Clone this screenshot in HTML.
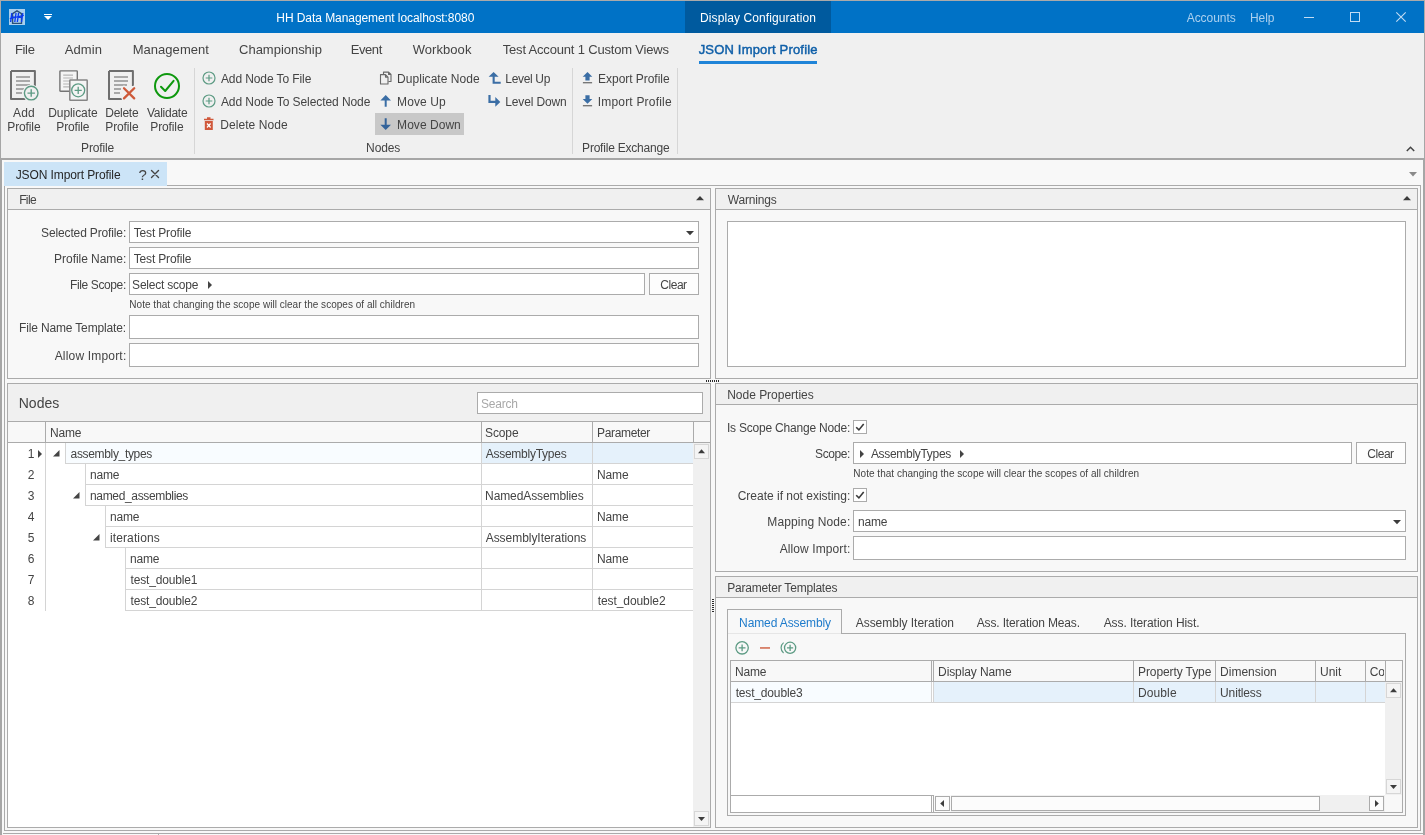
<!DOCTYPE html>
<html lang="en">
<head>
<meta charset="utf-8">
<title>HH Data Management localhost:8080</title>
<style>
html,body{margin:0;padding:0;}
body{width:1425px;height:835px;overflow:hidden;position:relative;background:#f8f8f8;font-family:"Liberation Sans", sans-serif;will-change:transform;}
.b{position:absolute;box-sizing:border-box;}
.t{position:absolute;white-space:pre;line-height:1;font-family:"Liberation Sans", sans-serif;will-change:opacity;}
svg{overflow:visible;}
</style>
</head>
<body>
<div id="app">
<div class="b" style="left:0px;top:0px;width:1425px;height:835px;background:#F8F8F8;"></div>
<div class="b" style="left:0px;top:0px;width:1425px;height:33px;background:#0072C6;"></div>
<div class="b" style="left:685px;top:1px;width:146px;height:32px;background:#005A9E;"></div>
<div class="b" style="left:1px;top:33px;width:1423px;height:125px;background:#F0F0F0;"></div>
<div class="b" style="left:0px;top:158px;width:1425px;height:2px;background:#A6A6A6"></div>
<div class="b" style="left:0px;top:0px;width:1425px;height:1px;background:#AAAAAA"></div>
<div class="b" style="left:0px;top:1px;width:1px;height:32px;background:#AAAAAA"></div>
<div class="b" style="left:1424px;top:1px;width:1px;height:32px;background:#AAAAAA"></div>
<div class="b" style="left:0px;top:33px;width:1px;height:802px;background:#A6A6A6"></div>
<div class="b" style="left:1424px;top:33px;width:1px;height:802px;background:#A6A6A6"></div>
<div class="b" style="left:1px;top:160px;width:1px;height:675px;background:#A6A6A6"></div>
<div class="b" style="left:1423px;top:160px;width:1px;height:675px;background:#A6A6A6"></div>
<header id="titlebar">
<svg class="b" style="left:9px;top:9px" width="16" height="16" viewBox="0 0 16 16"><rect x="0" y="0" width="16" height="16" fill="#A9CFEE"/><path d="M3.6 14.4 V4.7 L8 1.8 L12.5 4.7 V14.4 Z" fill="none" stroke="#2B5079" stroke-width="1.4"/><text x="0.8" y="13.2" font-family="Liberation Sans, sans-serif" font-size="12.5" font-style="italic" font-weight="700" fill="#0A3CF0" textLength="13.6" lengthAdjust="spacingAndGlyphs">HH</text><path d="M0.8 9.6 L14.8 6.4" stroke="#0A3CF0" stroke-width="1.2"/></svg>
<svg class="b" style="left:44px;top:14px" width="8" height="6" viewBox="0 0 8 6"><rect x="0" y="0" width="8" height="1" fill="#fff"/><path d="M0 2 H8 L4 6 Z" fill="#fff"/></svg>
<span class="t" style="top:11.84px;font-size:12px;color:#FFFFFF;letter-spacing:-0.064px;left:276.30px;">HH Data Management localhost:8080</span>
<span class="t" style="top:11.84px;font-size:12px;color:#FFFFFF;letter-spacing:0.091px;left:700.10px;">Display Configuration</span>
<span class="t" style="top:11.84px;font-size:12px;color:#ABD0EF;letter-spacing:-0.051px;left:1186.70px;">Accounts</span>
<span class="t" style="top:11.84px;font-size:12px;color:#ABD0EF;letter-spacing:-0.135px;left:1250.10px;">Help</span>
<svg class="b" style="left:1304px;top:17px" width="10" height="1" viewBox="0 0 10 1"><rect width="10" height="1" fill="#C2DCF3"/></svg>
<svg class="b" style="left:1350px;top:12px" width="10" height="10" viewBox="0 0 10 10"><rect x="0.5" y="0.5" width="9" height="9" fill="none" stroke="#C2DCF3" stroke-width="1"/></svg>
<svg class="b" style="left:1396px;top:12px" width="10" height="10" viewBox="0 0 10 10"><path d="M0.3 0.3 L9.7 9.7 M9.7 0.3 L0.3 9.7" stroke="#C2DCF3" stroke-width="1.1" fill="none"/></svg>
</header>
<nav id="menu">
<span class="t" style="top:43.00px;font-size:13px;color:#444;letter-spacing:-0.306px;left:14.90px;">File</span>
<span class="t" style="top:43.00px;font-size:13px;color:#444;letter-spacing:0.095px;left:64.70px;">Admin</span>
<span class="t" style="top:43.00px;font-size:13px;color:#444;letter-spacing:0.037px;left:132.70px;">Management</span>
<span class="t" style="top:43.00px;font-size:13px;color:#444;letter-spacing:-0.025px;left:239.10px;">Championship</span>
<span class="t" style="top:43.00px;font-size:13px;color:#444;letter-spacing:-0.408px;left:350.70px;">Event</span>
<span class="t" style="top:43.00px;font-size:13px;color:#444;letter-spacing:0.059px;left:412.70px;">Workbook</span>
<span class="t" style="top:43.00px;font-size:13px;color:#444;letter-spacing:-0.178px;left:502.70px;">Test Account 1 Custom Views</span>
<span class="t" style="top:43.00px;font-size:13px;color:#0F5FA8;letter-spacing:0.180px;left:698.70px;-webkit-text-stroke:0.45px #0F5FA8;">JSON Import Profile</span>
<div class="b" style="left:699px;top:61px;width:118px;height:3px;background:#1F84D8"></div>
</nav>
<section id="ribbon">
<svg class="b" style="left:8px;top:68px" width="34" height="34" viewBox="0 0 34 34"><path d="M3 3 H26.9 V20 M19 30.9 H3 V3" fill="none" stroke="#6E6E6E" stroke-width="2" stroke-linejoin="round"/><path d="M8 9 H22 M8 13 H22 M8 17 H22 M8 21 H16 M8 25 H14" stroke="#A9A9A9" stroke-width="2"/><circle cx="23.2" cy="25.1" r="8.6" fill="#F0F0F0"/><circle cx="23.2" cy="25.1" r="6.8" fill="#F0F0F0" stroke="#5D9B84" stroke-width="1.4"/><path d="M19.46 25.1 H26.939999999999998 M23.2 21.36 V28.840000000000003" stroke="#5D9B84" stroke-width="1.4" fill="none"/></svg>
<svg class="b" style="left:57px;top:68px" width="34" height="34" viewBox="0 0 34 34"><rect x="2.9" y="2.9" width="17.4" height="20.4" rx="0.6" fill="#F4F4F4" stroke="#747474" stroke-width="1.4"/><path d="M6.2 7.1 H16 M6.2 10 H16 M6.2 13 H16 M6.2 16 H16 M6.2 18.9 H16" stroke="#B4B4B4" stroke-width="1.1"/><rect x="12.8" y="12" width="17.4" height="20.3" rx="0.6" fill="#F4F4F4" stroke="#858585" stroke-width="1.5"/><circle cx="21.2" cy="22.3" r="6.5" fill="#F4F4F4" stroke="#5D9B84" stroke-width="1.3"/><path d="M17.625 22.3 H24.775 M21.2 18.725 V25.875" stroke="#5D9B84" stroke-width="1.3" fill="none"/></svg>
<svg class="b" style="left:106px;top:68px" width="34" height="34" viewBox="0 0 34 34"><path d="M3 3 H26.9 V18 M17 30.9 H3 V3" fill="none" stroke="#6E6E6E" stroke-width="2" stroke-linejoin="round"/><path d="M8 9 H22 M8 13 H22 M8 17 H21 M8 21 H15 M8 25 H14" stroke="#A9A9A9" stroke-width="2"/><path d="M18 20.2 L28.2 30.4 M28.2 20.2 L18 30.4" stroke="#F0F0F0" stroke-width="5" stroke-linecap="round" fill="none"/><path d="M18 20.2 L28.2 30.4 M28.2 20.2 L18 30.4" stroke="#CE5A3A" stroke-width="2.3" stroke-linecap="round" fill="none"/></svg>
<svg class="b" style="left:151px;top:70px" width="32" height="32" viewBox="0 0 32 32"><circle cx="16" cy="16" r="12" fill="none" stroke="#0E980E" stroke-width="2"/><path d="M10 16.8 L14.2 21 L22.6 10.8" fill="none" stroke="#0E980E" stroke-width="2" stroke-linecap="round" stroke-linejoin="round"/></svg>
<span class="t" style="top:106.84px;font-size:12px;color:#444;letter-spacing:0.261px;left:12.90px;">Add</span>
<span class="t" style="top:120.84px;font-size:12px;color:#444;letter-spacing:-0.123px;left:7.30px;">Profile</span>
<span class="t" style="top:106.84px;font-size:12px;color:#444;letter-spacing:-0.094px;left:48.30px;">Duplicate</span>
<span class="t" style="top:120.84px;font-size:12px;color:#444;letter-spacing:-0.157px;left:56.30px;">Profile</span>
<span class="t" style="top:106.84px;font-size:12px;color:#444;letter-spacing:-0.283px;left:105.30px;">Delete</span>
<span class="t" style="top:120.84px;font-size:12px;color:#444;letter-spacing:-0.123px;left:105.30px;">Profile</span>
<span class="t" style="top:106.84px;font-size:12px;color:#444;letter-spacing:-0.257px;left:146.90px;">Validate</span>
<span class="t" style="top:120.84px;font-size:12px;color:#444;letter-spacing:-0.123px;left:150.30px;">Profile</span>
<span class="t" style="top:141.84px;font-size:12px;color:#444;letter-spacing:-0.157px;left:81.10px;">Profile</span>
<div class="b" style="left:194px;top:68px;width:1px;height:86px;background:#D6D6D6"></div>
<svg class="b" style="left:202px;top:71px" width="14" height="14" viewBox="0 0 14 14"><circle cx="7" cy="7" r="6" fill="#F0F0F0" stroke="#5D9B84" stroke-width="1.2"/><path d="M3.6999999999999997 7 H10.3 M7 3.6999999999999997 V10.3" stroke="#5D9B84" stroke-width="1.2" fill="none"/></svg>
<svg class="b" style="left:202px;top:94px" width="14" height="14" viewBox="0 0 14 14"><circle cx="7" cy="7" r="6" fill="#F0F0F0" stroke="#5D9B84" stroke-width="1.2"/><path d="M3.6999999999999997 7 H10.3 M7 3.6999999999999997 V10.3" stroke="#5D9B84" stroke-width="1.2" fill="none"/></svg>
<svg class="b" style="left:203px;top:117px" width="12" height="14" viewBox="0 0 12 14"><path d="M1 2.5 H10.5 M4 1 H7.5" stroke="#D0583B" stroke-width="1.6" fill="none"/><path d="M1.8 4 H9.8 V13 H1.8 Z" fill="#D0583B"/><path d="M4 6.5 L7.6 10.5 M7.6 6.5 L4 10.5" stroke="#fff" stroke-width="1.2"/></svg>
<span class="t" style="top:72.84px;font-size:12px;color:#444;letter-spacing:-0.092px;left:220.90px;">Add Node To File</span>
<span class="t" style="top:95.84px;font-size:12px;color:#444;letter-spacing:-0.073px;left:220.90px;">Add Node To Selected Node</span>
<span class="t" style="top:118.84px;font-size:12px;color:#444;letter-spacing:0.056px;left:220.30px;">Delete Node</span>
<div class="b" style="left:375px;top:113px;width:89px;height:22px;background:#C8C8C8;"></div>
<svg class="b" style="left:379px;top:71px" width="14" height="14" viewBox="0 0 14 14"><path d="M4.5 3 V1.1 H9.6 L12 3.5 V10.5 H9.4 M9.6 1.1 V3.5 H12" fill="none" stroke="#686868" stroke-width="1.1" stroke-linejoin="round"/><path d="M1.5 3.6 H6.5 L9 6.1 V13 H1.5 Z M6.5 3.6 V6.1 H9" fill="none" stroke="#686868" stroke-width="1.1" stroke-linejoin="round"/></svg>
<svg class="b" style="left:379px;top:94px" width="14" height="14" viewBox="0 0 14 14"><path d="M6.7 1.1 L12 6.5 H7.7 V12.8 H5.7 V6.5 H1.4 Z" fill="#3B6EA5"/></svg>
<svg class="b" style="left:379px;top:117px" width="14" height="14" viewBox="0 0 14 14"><path d="M6.7 13.1 L12 7.7 H7.7 V1.2 H5.7 V7.7 H1.4 Z" fill="#33639A"/></svg>
<span class="t" style="top:72.84px;font-size:12px;color:#444;letter-spacing:0.033px;left:397.10px;">Duplicate Node</span>
<span class="t" style="top:95.84px;font-size:12px;color:#444;letter-spacing:0.076px;left:397.10px;">Move Up</span>
<span class="t" style="top:118.84px;font-size:12px;color:#444;letter-spacing:0.040px;left:397.10px;">Move Down</span>
<svg class="b" style="left:488px;top:71px" width="14" height="14" viewBox="0 0 14 14"><path d="M5.6 0.9 L10.6 5.7 H6.7 V10.8 H12.7 V12.8 H4.6 V5.7 H0.6 Z" fill="#3B6EA5"/></svg>
<svg class="b" style="left:488px;top:94px" width="14" height="14" viewBox="0 0 14 14"><path d="M0.4 1 H2.6 V6.8 H7.3 V3.1 L12.3 7.9 L7.3 12.7 V8.9 H0.4 Z" fill="#3B6EA5"/></svg>
<span class="t" style="top:72.84px;font-size:12px;color:#444;letter-spacing:-0.327px;left:505.30px;">Level Up</span>
<span class="t" style="top:95.84px;font-size:12px;color:#444;letter-spacing:-0.136px;left:505.30px;">Level Down</span>
<span class="t" style="top:141.84px;font-size:12px;color:#444;letter-spacing:-0.122px;left:366.10px;">Nodes</span>
<div class="b" style="left:572px;top:68px;width:1px;height:86px;background:#D6D6D6"></div>
<svg class="b" style="left:582px;top:71px" width="12" height="14" viewBox="0 0 12 14"><path d="M5.5 0.9 L10.3 5.8 H7.6 V9.4 H3.4 V5.8 H0.7 Z" fill="#3B6EA5"/><rect x="0.9" y="11.2" width="9.2" height="1.1" fill="#5A5A5A"/></svg>
<svg class="b" style="left:582px;top:94px" width="12" height="14" viewBox="0 0 12 14"><path d="M5.5 9.7 L10.3 4.9 H7.6 V1.3 H3.4 V4.9 H0.7 Z" fill="#3B6EA5"/><rect x="0.9" y="11.2" width="9.2" height="1.1" fill="#5A5A5A"/></svg>
<span class="t" style="top:72.84px;font-size:12px;color:#444;letter-spacing:-0.043px;left:598.10px;">Export Profile</span>
<span class="t" style="top:95.84px;font-size:12px;color:#444;letter-spacing:0.194px;left:597.70px;">Import Profile</span>
<span class="t" style="top:141.84px;font-size:12px;color:#444;letter-spacing:-0.216px;left:582.10px;">Profile Exchange</span>
<div class="b" style="left:677px;top:68px;width:1px;height:86px;background:#D6D6D6"></div>
<svg class="b" style="left:1406px;top:146px" width="9" height="6" viewBox="0 0 9 6"><path d="M0.8 5 L4.5 1.3 L8.2 5" fill="none" stroke="#444" stroke-width="1.5"/></svg>
</section>
<main id="workspace">
<div class="b" style="left:4px;top:162px;width:163px;height:24px;background:#CCE4F7;"></div>
<div class="b" style="left:167px;top:185px;width:1254px;height:1px;background:#ABABAB"></div>
<div class="b" style="left:4px;top:186px;width:1px;height:645px;background:#ABABAB"></div>
<div class="b" style="left:1420px;top:186px;width:1px;height:645px;background:#ABABAB"></div>
<div class="b" style="left:4px;top:830px;width:1417px;height:1px;background:#ABABAB"></div>
<span class="t" style="top:168.84px;font-size:12px;color:#262626;letter-spacing:-0.101px;left:15.70px;">JSON Import Profile</span>
<span class="t" style="top:166.50px;font-size:15px;color:#444;letter-spacing:-0.900px;left:138.50px;">?</span>
<svg class="b" style="left:151px;top:170px" width="8" height="8" viewBox="0 0 8 8"><path d="M0.5 0.5 L7.5 7.5 M7.5 0.5 L0.5 7.5" stroke="#444" stroke-width="1.4" stroke-linecap="round" fill="none"/></svg>
<svg class="b" style="left:1409px;top:172px" width="8" height="5" viewBox="0 0 8 5"><path d="M0 0 H8 L4 4.5 Z" fill="#8A8A8A"/></svg>
<div class="b" style="left:3px;top:833px;width:1420px;height:1px;background:#ABABAB"></div>
<div class="b" style="left:158px;top:833px;width:1px;height:2px;background:#ABABAB"></div>
<section id="file-panel">
<div class="b" style="left:7px;top:188px;width:704px;height:191px;background:#F8F8F8;box-shadow:inset 0 0 0 1px #ABABAB;"></div>
<div class="b" style="left:8px;top:189px;width:702px;height:20px;background:#F0F0F0;"></div>
<div class="b" style="left:7px;top:209px;width:704px;height:1px;background:#ABABAB"></div>
<span class="t" style="top:193.84px;font-size:12px;color:#444;letter-spacing:-0.654px;left:19.20px;">File</span>
<svg class="b" style="left:696px;top:196px" width="8" height="4" viewBox="0 0 8 4"><path d="M0 4.2 H8 L4 0 Z" fill="#3C3C3C"/></svg>
<span class="t" style="top:226.84px;font-size:12px;color:#444;letter-spacing:-0.140px;left:41.10px;">Selected Profile:</span>
<span class="t" style="top:252.84px;font-size:12px;color:#444;letter-spacing:-0.046px;left:54.10px;">Profile Name:</span>
<span class="t" style="top:278.84px;font-size:12px;color:#444;letter-spacing:-0.390px;left:70.10px;">File Scope:</span>
<span class="t" style="top:321.84px;font-size:12px;color:#444;letter-spacing:-0.161px;left:19.10px;">File Name Template:</span>
<span class="t" style="top:349.84px;font-size:12px;color:#444;letter-spacing:0.182px;left:54.70px;">Allow Import:</span>
<div class="b" style="left:129px;top:221px;width:570px;height:22px;background:#FFFFFF;box-shadow:inset 0 0 0 1px #ABABAB;"></div>
<div class="b" style="left:129px;top:247px;width:570px;height:22px;background:#FFFFFF;box-shadow:inset 0 0 0 1px #ABABAB;"></div>
<div class="b" style="left:129px;top:273px;width:516px;height:22px;background:#FFFFFF;box-shadow:inset 0 0 0 1px #ABABAB;"></div>
<div class="b" style="left:649px;top:273px;width:50px;height:22px;background:#FDFDFD;box-shadow:inset 0 0 0 1px #ABABAB;"></div>
<div class="b" style="left:129px;top:315px;width:570px;height:24px;background:#FFFFFF;box-shadow:inset 0 0 0 1px #ABABAB;"></div>
<div class="b" style="left:129px;top:343px;width:570px;height:24px;background:#FFFFFF;box-shadow:inset 0 0 0 1px #ABABAB;"></div>
<span class="t" style="top:226.84px;font-size:12px;color:#444;letter-spacing:-0.153px;left:133.70px;">Test Profile</span>
<span class="t" style="top:252.84px;font-size:12px;color:#444;letter-spacing:-0.153px;left:133.70px;">Test Profile</span>
<span class="t" style="top:278.84px;font-size:12px;color:#444;letter-spacing:-0.221px;left:132.10px;">Select scope</span>
<svg class="b" style="left:208px;top:281px" width="4" height="8" viewBox="0 0 4 8"><path d="M0 0 L4 4 L0 8 Z" fill="#444"/></svg>
<span class="t" style="top:278.84px;font-size:12px;color:#444;letter-spacing:-0.470px;left:660.30px;">Clear</span>
<svg class="b" style="left:686px;top:231px" width="8" height="4" viewBox="0 0 8 4"><path d="M0 0 H8 L4 4.2 Z" fill="#3C3C3C"/></svg>
<span class="t" style="top:299.54px;font-size:10px;color:#444;letter-spacing:0.026px;left:129.30px;">Note that changing the scope will clear the scopes of all children</span>
</section>
<section id="warnings-panel">
<div class="b" style="left:715px;top:188px;width:703px;height:191px;background:#F8F8F8;box-shadow:inset 0 0 0 1px #ABABAB;"></div>
<div class="b" style="left:716px;top:189px;width:701px;height:20px;background:#F0F0F0;"></div>
<div class="b" style="left:715px;top:209px;width:703px;height:1px;background:#ABABAB"></div>
<span class="t" style="top:193.84px;font-size:12px;color:#444;letter-spacing:-0.191px;left:727.80px;">Warnings</span>
<svg class="b" style="left:1403px;top:196px" width="8" height="4" viewBox="0 0 8 4"><path d="M0 4.2 H8 L4 0 Z" fill="#3C3C3C"/></svg>
<div class="b" style="left:727px;top:221px;width:679px;height:146px;background:#FFFFFF;box-shadow:inset 0 0 0 1px #ABABAB;"></div>
</section>
<svg class="b" style="left:706px;top:380px" width="14" height="2" viewBox="0 0 14 2"><rect x="0" y="0" width="1" height="2" fill="#2A2A2A"/><rect x="2" y="0" width="1" height="2" fill="#2A2A2A"/><rect x="4" y="0" width="1" height="2" fill="#2A2A2A"/><rect x="6" y="0" width="1" height="2" fill="#2A2A2A"/><rect x="8" y="0" width="1" height="2" fill="#2A2A2A"/><rect x="10" y="0" width="1" height="2" fill="#2A2A2A"/><rect x="12" y="0" width="1" height="2" fill="#2A2A2A"/></svg>
<svg class="b" style="left:712px;top:599px" width="2" height="14" viewBox="0 0 2 14"><rect x="0" y="0" width="2" height="1" fill="#2A2A2A"/><rect x="0" y="2" width="2" height="1" fill="#2A2A2A"/><rect x="0" y="4" width="2" height="1" fill="#2A2A2A"/><rect x="0" y="6" width="2" height="1" fill="#2A2A2A"/><rect x="0" y="8" width="2" height="1" fill="#2A2A2A"/><rect x="0" y="10" width="2" height="1" fill="#2A2A2A"/><rect x="0" y="12" width="2" height="1" fill="#2A2A2A"/></svg>
<section id="nodes-panel">
<div class="b" style="left:7px;top:383px;width:704px;height:445px;background:#FFFFFF;box-shadow:inset 0 0 0 1px #ABABAB;"></div>
<div class="b" style="left:8px;top:384px;width:702px;height:37px;background:#F0F0F0;"></div>
<div class="b" style="left:7px;top:421px;width:704px;height:1px;background:#ABABAB"></div>
<span class="t" style="top:396.15px;font-size:14px;color:#444;letter-spacing:0.033px;left:18.70px;">Nodes</span>
<div class="b" style="left:477px;top:392px;width:226px;height:22px;background:#FFFFFF;box-shadow:inset 0 0 0 1px #ABABAB;"></div>
<span class="t" style="top:397.84px;font-size:12px;color:#A8A8A8;letter-spacing:-0.230px;left:481.10px;">Search</span>
<div class="b" style="left:8px;top:422px;width:702px;height:20px;background:#F8F8F8;"></div>
<div class="b" style="left:7px;top:442px;width:704px;height:1px;background:#ABABAB"></div>
<div class="b" style="left:45px;top:422px;width:1px;height:21px;background:#ABABAB"></div>
<div class="b" style="left:481px;top:422px;width:1px;height:21px;background:#ABABAB"></div>
<div class="b" style="left:592px;top:422px;width:1px;height:21px;background:#ABABAB"></div>
<div class="b" style="left:693px;top:422px;width:1px;height:21px;background:#ABABAB"></div>
<span class="t" style="top:426.84px;font-size:12px;color:#444;letter-spacing:-0.245px;left:50.10px;">Name</span>
<span class="t" style="top:426.84px;font-size:12px;color:#444;letter-spacing:-0.138px;left:485.10px;">Scope</span>
<span class="t" style="top:426.84px;font-size:12px;color:#444;letter-spacing:-0.353px;left:597.10px;">Parameter</span>
<div class="b" style="left:45px;top:443px;width:1px;height:168px;background:#D4D4D4"></div>
<div class="b" style="left:66px;top:443px;width:415px;height:20px;background:#F8FCFF;"></div>
<div class="b" style="left:482px;top:443px;width:211px;height:20px;background:#E5F1FB;"></div>
<div class="b" style="left:65px;top:463px;width:628px;height:1px;background:#D4D4D4"></div>
<div class="b" style="left:65px;top:443px;width:1px;height:21px;background:#D4D4D4"></div>
<div class="b" style="left:481px;top:443px;width:1px;height:21px;background:#D4D4D4"></div>
<div class="b" style="left:592px;top:443px;width:1px;height:21px;background:#D4D4D4"></div>
<span class="t" style="top:447.84px;font-size:12px;color:#444;left:27.70px;">1</span>
<span class="t" style="top:447.84px;font-size:12px;color:#444;letter-spacing:-0.334px;left:70.60px;">assembly_types</span>
<span class="t" style="top:447.84px;font-size:12px;color:#444;letter-spacing:-0.252px;left:485.70px;">AssemblyTypes</span>
<svg class="b" style="left:53px;top:450px" width="7" height="7" viewBox="0 0 7 7"><path d="M0 6.5 H6.5 V0 Z" fill="#444"/></svg>
<div class="b" style="left:85px;top:484px;width:608px;height:1px;background:#D4D4D4"></div>
<div class="b" style="left:85px;top:464px;width:1px;height:21px;background:#D4D4D4"></div>
<div class="b" style="left:481px;top:464px;width:1px;height:21px;background:#D4D4D4"></div>
<div class="b" style="left:592px;top:464px;width:1px;height:21px;background:#D4D4D4"></div>
<span class="t" style="top:468.84px;font-size:12px;color:#444;left:27.70px;">2</span>
<span class="t" style="top:468.84px;font-size:12px;color:#444;letter-spacing:-0.215px;left:90.00px;">name</span>
<span class="t" style="top:468.84px;font-size:12px;color:#444;letter-spacing:-0.179px;left:597.10px;">Name</span>
<div class="b" style="left:85px;top:505px;width:608px;height:1px;background:#D4D4D4"></div>
<div class="b" style="left:85px;top:485px;width:1px;height:21px;background:#D4D4D4"></div>
<div class="b" style="left:481px;top:485px;width:1px;height:21px;background:#D4D4D4"></div>
<div class="b" style="left:592px;top:485px;width:1px;height:21px;background:#D4D4D4"></div>
<span class="t" style="top:489.84px;font-size:12px;color:#444;left:27.70px;">3</span>
<span class="t" style="top:489.84px;font-size:12px;color:#444;letter-spacing:-0.339px;left:90.00px;">named_assemblies</span>
<span class="t" style="top:489.84px;font-size:12px;color:#444;letter-spacing:-0.103px;left:485.10px;">NamedAssemblies</span>
<svg class="b" style="left:73px;top:492px" width="7" height="7" viewBox="0 0 7 7"><path d="M0 6.5 H6.5 V0 Z" fill="#444"/></svg>
<div class="b" style="left:105px;top:526px;width:588px;height:1px;background:#D4D4D4"></div>
<div class="b" style="left:105px;top:506px;width:1px;height:21px;background:#D4D4D4"></div>
<div class="b" style="left:481px;top:506px;width:1px;height:21px;background:#D4D4D4"></div>
<div class="b" style="left:592px;top:506px;width:1px;height:21px;background:#D4D4D4"></div>
<span class="t" style="top:510.84px;font-size:12px;color:#444;left:27.70px;">4</span>
<span class="t" style="top:510.84px;font-size:12px;color:#444;letter-spacing:-0.215px;left:110.00px;">name</span>
<span class="t" style="top:510.84px;font-size:12px;color:#444;letter-spacing:-0.179px;left:597.10px;">Name</span>
<div class="b" style="left:105px;top:547px;width:588px;height:1px;background:#D4D4D4"></div>
<div class="b" style="left:105px;top:527px;width:1px;height:21px;background:#D4D4D4"></div>
<div class="b" style="left:481px;top:527px;width:1px;height:21px;background:#D4D4D4"></div>
<div class="b" style="left:592px;top:527px;width:1px;height:21px;background:#D4D4D4"></div>
<span class="t" style="top:531.84px;font-size:12px;color:#444;left:27.70px;">5</span>
<span class="t" style="top:531.84px;font-size:12px;color:#444;letter-spacing:0.112px;left:110.00px;">iterations</span>
<span class="t" style="top:531.84px;font-size:12px;color:#444;letter-spacing:-0.045px;left:485.70px;">AssemblyIterations</span>
<svg class="b" style="left:93px;top:534px" width="7" height="7" viewBox="0 0 7 7"><path d="M0 6.5 H6.5 V0 Z" fill="#444"/></svg>
<div class="b" style="left:125px;top:568px;width:568px;height:1px;background:#D4D4D4"></div>
<div class="b" style="left:125px;top:548px;width:1px;height:21px;background:#D4D4D4"></div>
<div class="b" style="left:481px;top:548px;width:1px;height:21px;background:#D4D4D4"></div>
<div class="b" style="left:592px;top:548px;width:1px;height:21px;background:#D4D4D4"></div>
<span class="t" style="top:552.84px;font-size:12px;color:#444;left:27.70px;">6</span>
<span class="t" style="top:552.84px;font-size:12px;color:#444;letter-spacing:-0.215px;left:130.00px;">name</span>
<span class="t" style="top:552.84px;font-size:12px;color:#444;letter-spacing:-0.179px;left:597.10px;">Name</span>
<div class="b" style="left:125px;top:589px;width:568px;height:1px;background:#D4D4D4"></div>
<div class="b" style="left:125px;top:569px;width:1px;height:21px;background:#D4D4D4"></div>
<div class="b" style="left:481px;top:569px;width:1px;height:21px;background:#D4D4D4"></div>
<div class="b" style="left:592px;top:569px;width:1px;height:21px;background:#D4D4D4"></div>
<span class="t" style="top:573.84px;font-size:12px;color:#444;left:27.70px;">7</span>
<span class="t" style="top:573.84px;font-size:12px;color:#444;letter-spacing:-0.177px;left:130.60px;">test_double1</span>
<div class="b" style="left:125px;top:610px;width:568px;height:1px;background:#D4D4D4"></div>
<div class="b" style="left:125px;top:590px;width:1px;height:21px;background:#D4D4D4"></div>
<div class="b" style="left:481px;top:590px;width:1px;height:21px;background:#D4D4D4"></div>
<div class="b" style="left:592px;top:590px;width:1px;height:21px;background:#D4D4D4"></div>
<span class="t" style="top:594.84px;font-size:12px;color:#444;left:27.70px;">8</span>
<span class="t" style="top:594.84px;font-size:12px;color:#444;letter-spacing:-0.177px;left:130.60px;">test_double2</span>
<span class="t" style="top:594.84px;font-size:12px;color:#444;letter-spacing:-0.077px;left:597.70px;">test_double2</span>
<svg class="b" style="left:38px;top:450px" width="4" height="8" viewBox="0 0 4 8"><path d="M0 0 L4 4 L0 8 Z" fill="#444"/></svg>
<div class="b" style="left:693px;top:443px;width:17px;height:384px;background:#F0F0F0;"></div>
<div class="b" style="left:694px;top:444px;width:15px;height:15px;background:#F4F4F4;box-shadow:inset 0 0 0 1px #D6D6D6;"></div>
<svg class="b" style="left:698px;top:449px" width="7" height="4" viewBox="0 0 7 4"><path d="M0 4.2 H7 L3.5 0.2 Z" fill="#3C3C3C"/></svg>
<div class="b" style="left:694px;top:811px;width:15px;height:15px;background:#F4F4F4;box-shadow:inset 0 0 0 1px #D6D6D6;"></div>
<svg class="b" style="left:698px;top:817px" width="7" height="4" viewBox="0 0 7 4"><path d="M0 0 H7 L3.5 4 Z" fill="#3C3C3C"/></svg>
</section>
<section id="node-properties">
<div class="b" style="left:715px;top:383px;width:703px;height:189px;background:#F8F8F8;box-shadow:inset 0 0 0 1px #ABABAB;"></div>
<div class="b" style="left:716px;top:384px;width:701px;height:20px;background:#F0F0F0;"></div>
<div class="b" style="left:715px;top:404px;width:703px;height:1px;background:#ABABAB"></div>
<span class="t" style="top:388.84px;font-size:12px;color:#444;letter-spacing:-0.015px;left:727.20px;">Node Properties</span>
<span class="t" style="top:421.84px;font-size:12px;color:#444;letter-spacing:-0.204px;left:726.90px;">Is Scope Change Node:</span>
<span class="t" style="top:447.84px;font-size:12px;color:#444;letter-spacing:-0.445px;left:815.10px;">Scope:</span>
<span class="t" style="top:489.84px;font-size:12px;color:#444;letter-spacing:-0.009px;left:737.70px;">Create if not existing:</span>
<span class="t" style="top:515.84px;font-size:12px;color:#444;letter-spacing:0.129px;left:767.30px;">Mapping Node:</span>
<span class="t" style="top:542.84px;font-size:12px;color:#444;letter-spacing:0.099px;left:779.70px;">Allow Import:</span>
<div class="b" style="left:853px;top:420px;width:14px;height:14px;background:#FFFFFF;box-shadow:inset 0 0 0 1px #ABABAB;"></div>
<svg class="b" style="left:853px;top:420px" width="14" height="14" viewBox="0 0 14 14"><path d="M3.2 7.2 L5.9 9.9 L10.7 3.9" fill="none" stroke="#3A3A3A" stroke-width="1.6"/></svg>
<div class="b" style="left:853px;top:488px;width:14px;height:14px;background:#FFFFFF;box-shadow:inset 0 0 0 1px #ABABAB;"></div>
<svg class="b" style="left:853px;top:488px" width="14" height="14" viewBox="0 0 14 14"><path d="M3.2 7.2 L5.9 9.9 L10.7 3.9" fill="none" stroke="#3A3A3A" stroke-width="1.6"/></svg>
<div class="b" style="left:853px;top:442px;width:499px;height:22px;background:#FFFFFF;box-shadow:inset 0 0 0 1px #ABABAB;"></div>
<div class="b" style="left:1356px;top:442px;width:50px;height:22px;background:#FDFDFD;box-shadow:inset 0 0 0 1px #ABABAB;"></div>
<span class="t" style="top:447.84px;font-size:12px;color:#444;letter-spacing:-0.470px;left:1367.30px;">Clear</span>
<svg class="b" style="left:860px;top:450px" width="4" height="8" viewBox="0 0 4 8"><path d="M0 0 L4 4 L0 8 Z" fill="#444"/></svg>
<span class="t" style="top:447.84px;font-size:12px;color:#444;letter-spacing:-0.302px;left:870.90px;">AssemblyTypes</span>
<svg class="b" style="left:960px;top:450px" width="4" height="8" viewBox="0 0 4 8"><path d="M0 0 L4 4 L0 8 Z" fill="#444"/></svg>
<span class="t" style="top:468.54px;font-size:10px;color:#444;letter-spacing:0.026px;left:853.30px;">Note that changing the scope will clear the scopes of all children</span>
<div class="b" style="left:853px;top:510px;width:553px;height:22px;background:#FFFFFF;box-shadow:inset 0 0 0 1px #ABABAB;"></div>
<span class="t" style="top:515.84px;font-size:12px;color:#444;letter-spacing:-0.248px;left:858.10px;">name</span>
<svg class="b" style="left:1393px;top:520px" width="8" height="4" viewBox="0 0 8 4"><path d="M0 0 H8 L4 4.2 Z" fill="#3C3C3C"/></svg>
<div class="b" style="left:853px;top:536px;width:553px;height:24px;background:#FFFFFF;box-shadow:inset 0 0 0 1px #ABABAB;"></div>
</section>
<section id="parameter-templates">
<div class="b" style="left:715px;top:576px;width:703px;height:252px;background:#F8F8F8;box-shadow:inset 0 0 0 1px #ABABAB;"></div>
<div class="b" style="left:716px;top:577px;width:701px;height:20px;background:#F0F0F0;"></div>
<div class="b" style="left:715px;top:597px;width:703px;height:1px;background:#ABABAB"></div>
<span class="t" style="top:581.84px;font-size:12px;color:#444;letter-spacing:-0.197px;left:727.20px;">Parameter Templates</span>
<div class="b" style="left:727px;top:633px;width:679px;height:183px;background:#F8F8F8;box-shadow:inset 0 0 0 1px #ABABAB;"></div>
<div class="b" style="left:727px;top:609px;width:115px;height:25px;background:#F8F8F8;box-shadow:inset 0 0 0 1px #ABABAB;"></div>
<div class="b" style="left:728px;top:633px;width:113px;height:1px;background:#E6E6E6"></div>
<span class="t" style="top:616.84px;font-size:12px;color:#1E7BCB;letter-spacing:-0.110px;left:739.10px;">Named Assembly</span>
<span class="t" style="top:616.84px;font-size:12px;color:#444;letter-spacing:-0.025px;left:855.70px;">Assembly Iteration</span>
<span class="t" style="top:616.84px;font-size:12px;color:#444;letter-spacing:-0.143px;left:976.70px;">Ass. Iteration Meas.</span>
<span class="t" style="top:616.84px;font-size:12px;color:#444;letter-spacing:-0.075px;left:1103.70px;">Ass. Iteration Hist.</span>
<svg class="b" style="left:735px;top:641px" width="14" height="14" viewBox="0 0 14 14"><circle cx="7.1" cy="6.8" r="6.2" fill="#F8F8F8" stroke="#5D9B84" stroke-width="1.3"/><path d="M3.689999999999999 6.8 H10.51 M7.1 3.3899999999999992 V10.21" stroke="#5D9B84" stroke-width="1.3" fill="none"/></svg>
<svg class="b" style="left:760px;top:647px" width="10" height="2" viewBox="0 0 10 2"><rect x="0" y="0.2" width="10" height="1.5" fill="#D0674A"/></svg>
<svg class="b" style="left:779px;top:641px" width="18" height="14" viewBox="0 0 18 14"><path d="M4.6 1.6 A6.6 6.6 0 0 0 4.6 12" fill="none" stroke="#5D9B84" stroke-width="1.2"/><circle cx="11.1" cy="6.8" r="5.6" fill="#F8F8F8" stroke="#5D9B84" stroke-width="1.3"/><path d="M8.02 6.8 H14.18 M11.1 3.7199999999999998 V9.879999999999999" stroke="#5D9B84" stroke-width="1.3" fill="none"/></svg>
<div class="b" style="left:730px;top:660px;width:673px;height:153px;background:#FFFFFF;box-shadow:inset 0 0 0 1px #ABABAB;"></div>
<div class="b" style="left:731px;top:661px;width:671px;height:20px;background:#F8F8F8;"></div>
<div class="b" style="left:730px;top:681px;width:673px;height:1px;background:#ABABAB"></div>
<div class="b" style="left:931px;top:661px;width:1px;height:21px;background:#ABABAB"></div>
<div class="b" style="left:933px;top:661px;width:1px;height:21px;background:#ABABAB"></div>
<div class="b" style="left:1133px;top:661px;width:1px;height:21px;background:#ABABAB"></div>
<div class="b" style="left:1215px;top:661px;width:1px;height:21px;background:#ABABAB"></div>
<div class="b" style="left:1315px;top:661px;width:1px;height:21px;background:#ABABAB"></div>
<div class="b" style="left:1365px;top:661px;width:1px;height:21px;background:#ABABAB"></div>
<div class="b" style="left:1385px;top:661px;width:1px;height:21px;background:#ABABAB"></div>
<span class="t" style="top:665.84px;font-size:12px;color:#444;letter-spacing:-0.245px;left:735.10px;">Name</span>
<span class="t" style="top:665.84px;font-size:12px;color:#444;letter-spacing:-0.111px;left:938.10px;">Display Name</span>
<span class="t" style="top:665.84px;font-size:12px;color:#444;letter-spacing:-0.094px;left:1138.00px;">Property Type</span>
<span class="t" style="top:665.84px;font-size:12px;color:#444;left:1220.10px;">Dimension</span>
<span class="t" style="top:665.84px;font-size:12px;color:#444;letter-spacing:-0.069px;left:1320.10px;">Unit</span>
<span class="t" style="top:665.84px;font-size:12px;color:#444;left:1369.70px;width:14px;overflow:hidden;">Co</span>
<div class="b" style="left:731px;top:682px;width:200px;height:20px;background:#F8FCFF;"></div>
<div class="b" style="left:934px;top:682px;width:451px;height:20px;background:#E5F1FB;"></div>
<div class="b" style="left:731px;top:702px;width:654px;height:1px;background:#D4D4D4"></div>
<div class="b" style="left:931px;top:682px;width:1px;height:21px;background:#D4D4D4"></div>
<div class="b" style="left:933px;top:682px;width:1px;height:21px;background:#D4D4D4"></div>
<div class="b" style="left:1133px;top:682px;width:1px;height:21px;background:#D4D4D4"></div>
<div class="b" style="left:1215px;top:682px;width:1px;height:21px;background:#D4D4D4"></div>
<div class="b" style="left:1315px;top:682px;width:1px;height:21px;background:#D4D4D4"></div>
<div class="b" style="left:1365px;top:682px;width:1px;height:21px;background:#D4D4D4"></div>
<span class="t" style="top:686.84px;font-size:12px;color:#444;letter-spacing:-0.168px;left:735.70px;">test_double3</span>
<span class="t" style="top:686.84px;font-size:12px;color:#444;letter-spacing:0.109px;left:1138.00px;">Double</span>
<span class="t" style="top:686.84px;font-size:12px;color:#444;letter-spacing:-0.154px;left:1220.10px;">Unitless</span>
<div class="b" style="left:1385px;top:682px;width:17px;height:113px;background:#F0F0F0;"></div>
<div class="b" style="left:1386px;top:683px;width:15px;height:15px;background:#F4F4F4;box-shadow:inset 0 0 0 1px #D6D6D6;"></div>
<svg class="b" style="left:1390px;top:688px" width="7" height="4" viewBox="0 0 7 4"><path d="M0 4.2 H7 L3.5 0.2 Z" fill="#3C3C3C"/></svg>
<div class="b" style="left:1386px;top:779px;width:15px;height:15px;background:#F4F4F4;box-shadow:inset 0 0 0 1px #D6D6D6;"></div>
<svg class="b" style="left:1390px;top:785px" width="7" height="4" viewBox="0 0 7 4"><path d="M0 0 H7 L3.5 4 Z" fill="#3C3C3C"/></svg>
<div class="b" style="left:730px;top:795px;width:204px;height:1px;background:#ABABAB"></div>
<div class="b" style="left:931px;top:796px;width:1px;height:16px;background:#ABABAB"></div>
<div class="b" style="left:933px;top:796px;width:1px;height:16px;background:#ABABAB"></div>
<div class="b" style="left:934px;top:795px;width:451px;height:17px;background:#F0F0F0;"></div>
<div class="b" style="left:934px;top:795px;width:17px;height:17px;background:#FAFAFA;"></div>
<div class="b" style="left:935px;top:796px;width:15px;height:15px;background:#FCFCFC;box-shadow:inset 0 0 0 1px #ABABAB;"></div>
<svg class="b" style="left:940px;top:800px" width="4" height="7" viewBox="0 0 4 7"><path d="M4 0 V7 L0.2 3.5 Z" fill="#3C3C3C"/></svg>
<div class="b" style="left:951px;top:796px;width:369px;height:15px;background:#FCFCFC;box-shadow:inset 0 0 0 1px #ABABAB;"></div>
<div class="b" style="left:1369px;top:796px;width:15px;height:15px;background:#FCFCFC;box-shadow:inset 0 0 0 1px #ABABAB;"></div>
<svg class="b" style="left:1375px;top:800px" width="4" height="7" viewBox="0 0 4 7"><path d="M0 0 V7 L3.8 3.5 Z" fill="#3C3C3C"/></svg>
<div class="b" style="left:1385px;top:795px;width:17px;height:17px;background:#F8F8F8;"></div>
</section>
</main>
</div>
</body>
</html>
